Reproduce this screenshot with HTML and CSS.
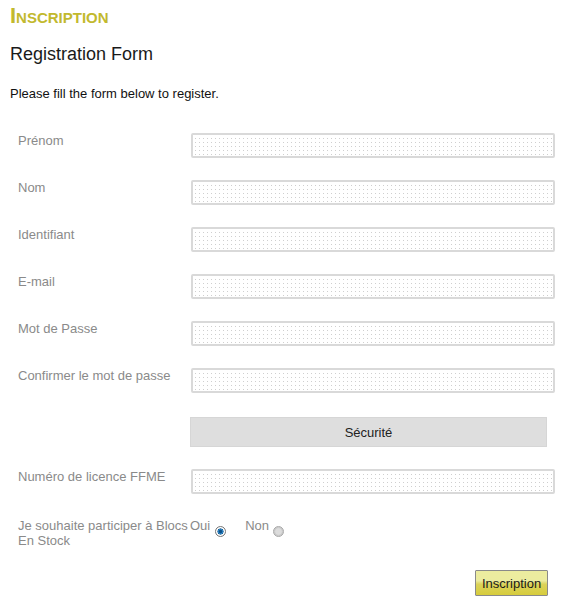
FILE: index.html
```html
<!DOCTYPE html>
<html lang="fr">
<head>
<meta charset="utf-8">
<title>Inscription</title>
<link rel="stylesheet" href="styles.css">
</head>
<body>
<div class="page">
  <h1 class="section-title">Inscription</h1>
  <h2 class="form-title">Registration Form</h2>
  <p class="intro">Please fill the form below to register.</p>
  <form class="reg-form">
    <div class="row">
      <label class="lbl" for="prenom">Prénom</label>
      <input class="field" id="prenom" type="text">
    </div>
    <div class="row">
      <label class="lbl" for="nom">Nom</label>
      <input class="field" id="nom" type="text">
    </div>
    <div class="row">
      <label class="lbl" for="ident">Identifiant</label>
      <input class="field" id="ident" type="text">
    </div>
    <div class="row">
      <label class="lbl" for="email">E-mail</label>
      <input class="field" id="email" type="text">
    </div>
    <div class="row">
      <label class="lbl" for="mdp">Mot de Passe</label>
      <input class="field" id="mdp" type="password">
    </div>
    <div class="row">
      <label class="lbl" for="mdp2">Confirmer le mot de passe</label>
      <input class="field" id="mdp2" type="password">
    </div>
    <div class="row row-secu">
      <span class="lbl"></span>
      <div class="secu">Sécurité</div>
    </div>
    <div class="row">
      <label class="lbl" for="licence">Numéro de licence FFME</label>
      <input class="field" id="licence" type="text">
    </div>
    <div class="row row-radio">
      <span class="lbl">Je souhaite participer à Blocs En Stock</span>
      <div class="choices">
        <label class="choice">Oui <input class="radio" type="radio" name="bes" checked></label>
        <label class="choice choice-non">Non <input class="radio" type="radio" name="bes"></label>
      </div>
    </div>
    <div class="row row-submit">
      <span class="lbl"></span>
      <div class="submit-wrap"><button class="btn" type="button">Inscription</button></div>
    </div>
  </form>
</div>
</body>
</html>
```
FILE: styles.css
```css
html, body {
  margin: 0;
  padding: 0;
  background: #fff;
}
body {
  font-family: "Liberation Sans", Arial, sans-serif;
  color: #222;
}
.page {
  padding: 4px 10px 0 10px;
}
.section-title {
  margin: 0;
  font-size: 22px;
  line-height: 23px;
  font-weight: bold;
  font-variant: small-caps;
  color: #c2b92e;
  letter-spacing: 0;
}
.form-title {
  margin: 16px 0 0 0;
  font-size: 18px;
  line-height: 22px;
  font-weight: normal;
  color: #1a1a1a;
}
.intro {
  margin: 21px 0 0 0;
  font-size: 13px;
  line-height: 15px;
  color: #111;
}
.reg-form {
  margin-top: 32px;
  padding-left: 8px;
  display: flex;
  flex-direction: column;
  gap: 22px;
}
.row {
  display: grid;
  grid-template-columns: 172px 365px;
  align-items: start;
}
.lbl {
  font-size: 13px;
  line-height: 15px;
  color: #8a8a8a;
}
.field {
  margin: 0 0 0 1px;
  box-sizing: border-box;
  width: 364px;
  height: 25px;
  border: 2px solid #d9d9d9;
  border-radius: 2px;
  background-color: #fff;
  background-image:
    linear-gradient(#fff 0 3px, transparent 3px),
    linear-gradient(90deg, #cfcfcf 0 1px, #fff 1px);
  background-size: 4px 4px, 4px 4px;
  background-position: 2px 0, 2px 0;
  outline: none;
  padding: 0 4px;
}
.row-secu {
  margin-top: 2px;
}
.secu {
  box-sizing: border-box;
  width: 357px;
  height: 30px;
  border: 1px solid #d6d6d6;
  background: #dedede;
  display: flex;
  align-items: center;
  justify-content: center;
  font-size: 13px;
  color: #222;
}
.row-radio {
  margin-top: 2px;
}
.choices {
  display: flex;
  align-items: flex-start;
}
.choice {
  display: flex;
  align-items: flex-start;
  font-size: 13px;
  line-height: 15px;
  color: #8a8a8a;
}
.choice-non {
  margin-left: 19px;
}
.radio {
  appearance: none;
  -webkit-appearance: none;
  margin: 8px 0 0 5px;
  width: 11px;
  height: 11px;
  box-sizing: border-box;
  border-radius: 50%;
  border: 1px solid #a8a8a8;
  background: radial-gradient(circle, #dcdcdc 0 45%, #c9c9c9 60%, #e2e2e2 100%);
}
.radio:checked {
  border: 1px solid #777;
  background: radial-gradient(circle, #0c4f86 0 20%, #2a86c8 35%, #1b5f94 45%, #ffffff 52%, #ffffff 68%, #9a9a9a 80%);
}
.choice-non .radio {
  margin-left: 4px;
}
.row-submit {
  margin-top: 0;
}
.submit-wrap {
  display: flex;
  justify-content: flex-end;
  padding-right: 7px;
}
.btn {
  box-sizing: border-box;
  width: 73px;
  height: 26px;
  border: 1px solid #8a8a8a;
  border-radius: 1px;
  padding: 0;
  background: linear-gradient(#ecec9f 0 40%, #dcd35a 55%, #d6cc3c 100%);
  font-family: "Liberation Sans", Arial, sans-serif;
  font-size: 13px;
  color: #1a1a1a;
}
```
